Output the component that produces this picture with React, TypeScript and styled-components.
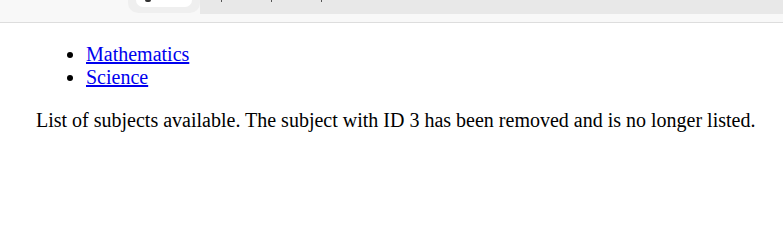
import React from "react";
import styled, { createGlobalStyle } from "styled-components";

const Global = createGlobalStyle`
  html, body { margin: 0; padding: 0; background: #ffffff; }
  body { font-family: "Liberation Serif", "Times New Roman", serif; font-size: 20px; color: #000; }
`;

const Chrome = styled.div`
  height: 22px;
  background: #f8f8f8;
  border-bottom: 1px solid #dddddd;
  display: flex;
  align-items: flex-start;
  overflow: hidden;
`;

const Spacer = styled.div`
  width: 128px;
  flex: none;
`;

const Tab = styled.div`
  width: 72px;
  height: 13px;
  flex: none;
  background: #efefef;
  border-radius: 0 0 10px 10px;
  display: flex;
  justify-content: center;
  align-items: flex-start;
`;

const Pill = styled.div`
  width: 56px;
  height: 7px;
  background: #ffffff;
  border-radius: 0 0 8px 8px;
  display: flex;
  align-items: flex-start;
  padding-left: 9px;
  box-sizing: border-box;
`;

const Favicon = styled.span`
  width: 6px;
  height: 2px;
  background: #333;
  border-radius: 0 0 3px 3px;
`;

const Address = styled.div`
  flex: 1;
  height: 14px;
  background: #e8e8e8;
  display: flex;
  align-items: flex-start;
  padding-left: 21px;
  gap: 49px;
`;

const Mark = styled.span`
  width: 1px;
  height: 2px;
  background: #555;
`;

const Content = styled.main`
  padding: 20px 0 0 36px;
`;

const List = styled.ul`
  margin: 0 0 20px;
  padding-left: 50px;
  line-height: 23px;
`;

const Item = styled.li`
  a { color: #0000ee; text-decoration: underline; }
`;

const Para = styled.p`
  margin: 0;
  line-height: 23px;
  white-space: nowrap;
`;

export default function App() {
  return (
    <>
      <Global />
      <Chrome>
        <Spacer />
        <Tab>
          <Pill>
            <Favicon />
          </Pill>
        </Tab>
        <Address>
          <Mark />
          <Mark />
          <Mark />
        </Address>
      </Chrome>
      <Content>
        <List>
          <Item><a href="#">Mathematics</a></Item>
          <Item><a href="#">Science</a></Item>
        </List>
        <Para>
          List of subjects available. The subject with ID 3 has been removed and is no longer listed.
        </Para>
      </Content>
    </>
  );
}
